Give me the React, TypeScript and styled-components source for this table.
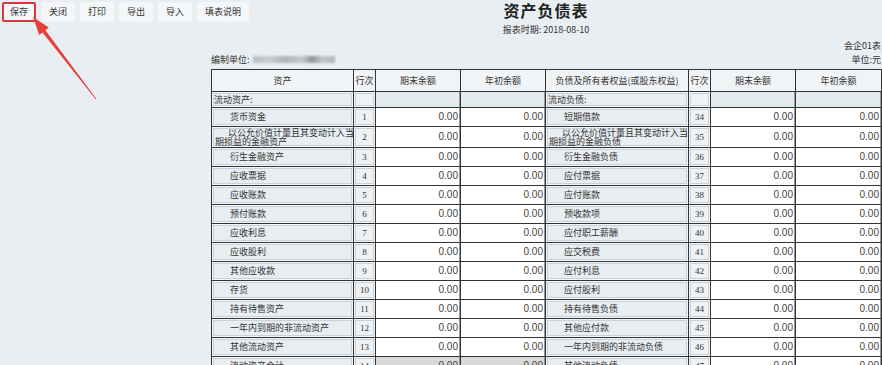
import React, { FC } from "react";
import styled, { createGlobalStyle } from "styled-components";

const GlobalStyle = createGlobalStyle`
  html, body {
    margin: 0;
    padding: 0;
    background: #e9eef2;
    font-family: "Noto Sans CJK SC", "Liberation Sans", sans-serif;
    color: #333;
    overflow: hidden;
  }
`;

const Page = styled.div`
  position: relative;
  display: grid;
  grid-template-columns: 211px 670px;
  width: 882px;
  height: 365px;
  overflow: hidden;
`;

const Toolbar = styled.div`
  display: flex;
  align-items: flex-start;
  gap: 5px;
  padding: 2px 0 0 2px;
`;

const ToolButton = styled.div<{ $active?: boolean }>`
  height: 16px;
  line-height: 16px;
  padding: 0 6px;
  font-size: 9px;
  color: #333;
  background: #f4f6f8;
  border-radius: 2px;
  border: ${(p) => (p.$active ? "2px solid #d9363e" : "2px solid transparent")};
  white-space: nowrap;
`;

const Report = styled.div`
  display: flex;
  flex-direction: column;
`;

const Title = styled.div`
  height: 21px;
  line-height: 21px;
  text-align: center;
  font-size: 16px;
  font-weight: 700;
  letter-spacing: 1px;
  color: #222;
`;

const Period = styled.div`
  height: 18px;
  line-height: 18px;
  text-align: center;
  font-size: 9px;
  color: #333;
`;

const MetaRight = styled.div`
  height: 13px;
  line-height: 13px;
  text-align: right;
  font-size: 9px;
`;

const MetaRow = styled.div`
  display: flex;
  justify-content: space-between;
  align-items: center;
  height: 14px;
  font-size: 9px;
  margin-bottom: 3px;
`;

const Unit = styled.div`
  display: flex;
  align-items: center;
  gap: 1px;
`;

const Blurred = styled.span`
  display: inline-block;
  width: 82px;
  height: 7px;
  margin-left: 2px;
  background: linear-gradient(
    90deg,
    #b9bec3 0%,
    #c9cdd1 20%,
    #aeb3b8 40%,
    #c5c9cd 60%,
    #8f959b 72%,
    #c3c7cb 85%,
    #b2b7bc 100%
  );
  filter: blur(1.2px);
`;

const Table = styled.table`
  border-collapse: collapse;
  table-layout: fixed;
  width: 670px;
  font-size: 9px;
`;

const HeadCell = styled.th`
  height: 21px;
  padding: 0;
  border: 1px solid #333;
  background: #f1f4f6;
  font-weight: 400;
  text-align: center;
  color: #333;
`;

const BoxCell = styled.td`
  padding: 1px;
  border: 1px solid #333;
  background: #f3f6f8;
  vertical-align: middle;
`;

const LabelBox = styled.div<{ $h: number; $indent: boolean; $twoLine?: boolean }>`
  height: ${(p) => p.$h}px;
  box-sizing: border-box;
  border: 1px solid #c9d2d9;
  background: #e8edf1;
  display: flex;
  align-items: center;
  padding-left: ${(p) => (p.$indent ? "16px" : "0")};
  white-space: nowrap;
  line-height: ${(p) => (p.$twoLine ? "9px" : "12px")};
  overflow: visible;
`;

const Wrapped = styled.span`
  display: block;
  margin-left: -15px;
  text-indent: 13px;
`;

const NoBox = styled.div<{ $h: number }>`
  height: ${(p) => p.$h}px;
  box-sizing: border-box;
  border: 1px solid #c9d2d9;
  background: #eef2f5;
  display: flex;
  align-items: center;
  justify-content: center;
  font-family: "Liberation Serif", serif;
  font-size: 9px;
  line-height: 10px;
`;

const ValueCell = styled.td<{ $kind: "section" | "total" | "value" }>`
  padding: 0 2px 0 0;
  border: 1px solid #333;
  text-align: right;
  font-family: "Liberation Sans", sans-serif;
  font-size: 10px;
  line-height: 12px;
  color: #444;
  background: ${(p) =>
    p.$kind === "section" ? "#e3ebee" : p.$kind === "total" ? "#d8d8d8" : "#ffffff"};
  box-shadow: inset -1px 0 0 #9a9a9a;
`;

const Arrow = styled.svg`
  position: absolute;
  left: 0;
  top: 0;
  width: 120px;
  height: 110px;
  pointer-events: none;
`;

type Item = { label: string; no?: string; kind: "section" | "item" | "total"; twoLine?: [string, string] };

const leftItems: Item[] = [
  { label: "流动资产:", kind: "section" },
  { label: "货币资金", no: "1", kind: "item" },
  { label: "", no: "2", kind: "item", twoLine: ["以公允价值计量且其变动计入当", "期损益的金融资产"] },
  { label: "衍生金融资产", no: "3", kind: "item" },
  { label: "应收票据", no: "4", kind: "item" },
  { label: "应收账款", no: "5", kind: "item" },
  { label: "预付账款", no: "6", kind: "item" },
  { label: "应收利息", no: "7", kind: "item" },
  { label: "应收股利", no: "8", kind: "item" },
  { label: "其他应收款", no: "9", kind: "item" },
  { label: "存货", no: "10", kind: "item" },
  { label: "持有待售资产", no: "11", kind: "item" },
  { label: "一年内到期的非流动资产", no: "12", kind: "item" },
  { label: "其他流动资产", no: "13", kind: "item" },
  { label: "流动资产合计", no: "14", kind: "total" },
];

const rightItems: Item[] = [
  { label: "流动负债:", kind: "section" },
  { label: "短期借款", no: "34", kind: "item" },
  { label: "", no: "35", kind: "item", twoLine: ["以公允价值计量且其变动计入当", "期损益的金融负债"] },
  { label: "衍生金融负债", no: "36", kind: "item" },
  { label: "应付票据", no: "37", kind: "item" },
  { label: "应付账款", no: "38", kind: "item" },
  { label: "预收款项", no: "39", kind: "item" },
  { label: "应付职工薪酬", no: "40", kind: "item" },
  { label: "应交税费", no: "41", kind: "item" },
  { label: "应付利息", no: "42", kind: "item" },
  { label: "应付股利", no: "43", kind: "item" },
  { label: "持有待售负债", no: "44", kind: "item" },
  { label: "其他应付款", no: "45", kind: "item" },
  { label: "一年内到期的非流动负债", no: "46", kind: "item" },
  { label: "其他流动负债", no: "47", kind: "item" },
];

const tools = ["保存", "关闭", "打印", "导出", "导入", "填表说明"];

const Side: FC<{ item: Item; totalGray: boolean; h: number }> = ({ item, totalGray, h }) => {
  const kind = item.kind === "section" ? "section" : item.kind === "total" && totalGray ? "total" : "value";
  const box = h - 3;
  return (
    <>
      <BoxCell>
        <LabelBox $h={box} $indent={item.kind !== "section"} $twoLine={!!item.twoLine}>
          {item.twoLine ? (
            <Wrapped>
              {item.twoLine[0]}
              <br />
              {item.twoLine[1]}
            </Wrapped>
          ) : (
            item.label
          )}
        </LabelBox>
      </BoxCell>
      <BoxCell>
        <NoBox $h={box}>{item.no}</NoBox>
      </BoxCell>
      <ValueCell $kind={kind}>{item.kind === "section" ? "" : "0.00"}</ValueCell>
      <ValueCell $kind={kind}>{item.kind === "section" ? "" : "0.00"}</ValueCell>
    </>
  );
};

const rowHeight = (i: number) => (i === 0 ? 16 : i === 2 ? 21 : 19);

const App: FC = () => {
  return (
    <>
      <GlobalStyle />
      <Page>
        <Toolbar>
          {tools.map((t, i) => (
            <ToolButton key={t} $active={i === 0}>
              {t}
            </ToolButton>
          ))}
        </Toolbar>
        <Report>
          <Title>资产负债表</Title>
          <Period>报表时期: 2018-08-10</Period>
          <MetaRight>会企01表</MetaRight>
          <MetaRow>
            <Unit>
              编制单位:
              <Blurred />
            </Unit>
            <span>单位:元</span>
          </MetaRow>
          <Table>
            <colgroup>
              <col style={{ width: 142 }} />
              <col style={{ width: 22 }} />
              <col style={{ width: 85 }} />
              <col style={{ width: 85 }} />
              <col style={{ width: 143 }} />
              <col style={{ width: 22 }} />
              <col style={{ width: 85 }} />
              <col style={{ width: 86 }} />
            </colgroup>
            <thead>
              <tr>
                <HeadCell>资产</HeadCell>
                <HeadCell>行次</HeadCell>
                <HeadCell>期末余额</HeadCell>
                <HeadCell>年初余额</HeadCell>
                <HeadCell>负债及所有者权益(或股东权益)</HeadCell>
                <HeadCell>行次</HeadCell>
                <HeadCell>期末余额</HeadCell>
                <HeadCell>年初余额</HeadCell>
              </tr>
            </thead>
            <tbody>
              {leftItems.map((item, i) => (
                <tr key={i}>
                  <Side item={item} totalGray h={rowHeight(i)} />
                  <Side item={rightItems[i]} totalGray={false} h={rowHeight(i)} />
                </tr>
              ))}
            </tbody>
          </Table>
        </Report>
        <Arrow viewBox="0 0 120 110">
          <polygon
            points="33,17 48.7,27.6 45.4,30.2 96.3,98.8 95.7,99.2 42.5,32.4 39.2,34.9"
            fill="#e5403a"
          />
        </Arrow>
      </Page>
    </>
  );
};

export default App;
